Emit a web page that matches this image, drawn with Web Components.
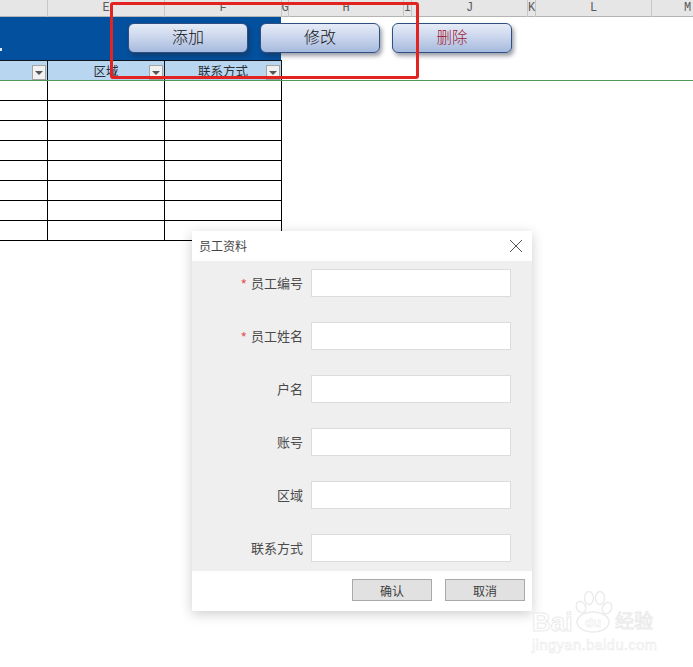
<!DOCTYPE html>
<html lang="zh">
<head>
<meta charset="utf-8">
<title>员工资料</title>
<style>
  html, body { margin: 0; height: 100%; overflow: hidden; background: #fff; }
  body { position: relative; width: 693px; height: 667px; font-family: "Noto Sans CJK SC", sans-serif; }
</style>
</head>
<body>
<excel-sheet></excel-sheet>
<macro-button style="left:128px">添加</macro-button>
<macro-button style="left:260px">修改</macro-button>
<macro-button style="left:392px" danger>删除</macro-button>
<red-mark></red-mark>
<staff-dialog></staff-dialog>
<baidu-mark></baidu-mark>

<script>
const COLS = '48px 117px 117px 7px 115px 8px 116px 8px 116px 72px'

class ExcelSheet extends HTMLElement {
  constructor() {
    super()
    this.shadow = this.attachShadow({ mode: 'open' })
  }

  connectedCallback() {
    const letters = ['', 'E', 'F', 'G', 'H', 'I', 'J', 'K', 'L', 'M']
    const heads = letters.map(l => `<span class="letter">${l}</span>`).join('')
    let rows = ''
    for (let i = 0; i < 8; i++) {
      rows += '<div class="row"><i></i><i></i><i></i></div>'
    }

    this.shadow.innerHTML = `
      <style>
        :host { display: block; width: 693px; overflow: hidden; }
        .letters {
          display: grid;
          grid-template-columns: ${COLS};
          height: 16px;
          background: #e6e6e6;
          border-bottom: 1px solid #b4b4b4;
        }
        .letter {
          display: flex;
          justify-content: center;
          border-right: 1px solid #c6c6c6;
          font: 12px/17px "Liberation Mono", monospace;
          color: #5a5a5a;
        }
        .banner {
          width: 281px;
          height: 43px;
          background: #03509e;
          position: relative;
        }
        .banner::before {
          content: "";
          position: absolute;
          left: 0;
          top: 31px;
          width: 2px;
          height: 3px;
          background: #dfe9f4;
        }
        .heads {
          display: flex;
          height: 21px;
          box-sizing: border-box;
          border-bottom: 1px solid #4f9a56;
        }
        .rows { width: 282px; }
        .row {
          display: grid;
          grid-template-columns: 48px 117px 117px;
          height: 20px;
          box-sizing: border-box;
          border-bottom: 1px solid #000;
        }
        .row i { border-right: 1px solid #000; }
      </style>
      <div class="letters">${heads}</div>
      <div class="banner"></div>
      <div class="heads">
        <filter-cell style="width:48px"></filter-cell>
        <filter-cell style="width:117px">区域</filter-cell>
        <filter-cell style="width:117px">联系方式</filter-cell>
      </div>
      <div class="rows">${rows}</div>
    `
  }
}

class FilterCell extends HTMLElement {
  constructor() {
    super()
    this.shadow = this.attachShadow({ mode: 'open' })
    this.shadow.innerHTML = `
      <style>
        :host {
          display: flex;
          justify-content: center;
          position: relative;
          box-sizing: border-box;
          height: 20px;
          background: #b8d6f0;
          border-top: 1px solid #10151c;
          border-right: 1px solid #10151c;
          font: 12.5px/20px "Noto Sans CJK SC", sans-serif;
          color: #2a2f35;
        }
        .arrow {
          position: absolute;
          right: 1px;
          top: 4px;
          width: 14px;
          height: 15px;
          box-sizing: border-box;
          background: #f1f1f1;
          border: 1px solid #a4a4a4;
          display: flex;
          align-items: center;
          justify-content: center;
        }
        .arrow::after {
          content: "";
          border: 4px solid transparent;
          border-top: 4px solid #555;
          border-bottom: 0;
        }
      </style>
      <slot></slot>
      <span class="arrow"></span>
    `
  }
}

class MacroButton extends HTMLElement {
  constructor() {
    super()
    this.shadow = this.attachShadow({ mode: 'open' })
    this.shadow.innerHTML = `
      <style>
        :host {
          position: absolute;
          top: 23px;
          width: 120px;
          height: 30px;
          box-sizing: border-box;
          padding-bottom: 4px;
          display: flex;
          align-items: center;
          justify-content: center;
          border: 1px solid #2f4f82;
          border-radius: 6px;
          background: linear-gradient(#e6ecf7, #d2dcef 35%, #a6bade);
          box-shadow: 2px 3px 4px rgba(30, 40, 60, .45);
          font: 300 16px "Noto Sans CJK SC", sans-serif;
          color: #111;
        }
        :host([danger]) { color: #a01530; font-size: 15.5px; }
      </style>
      <slot></slot>
    `
  }
}

class RedMark extends HTMLElement {
  constructor() {
    super()
    this.shadow = this.attachShadow({ mode: 'open' })
    this.shadow.innerHTML = `
      <style>
        :host {
          position: absolute;
          left: 110px;
          top: 2px;
          width: 309px;
          height: 77px;
          box-sizing: border-box;
          border: 3px solid #e3231f;
          border-radius: 3px;
        }
      </style>
    `
  }
}

class StaffField extends HTMLElement {
  constructor() {
    super()
    this.shadow = this.attachShadow({ mode: 'open' })
    this.shadow.innerHTML = `
      <style>
        :host {
          display: flex;
          align-items: center;
          justify-content: flex-end;
          gap: 8px;
          height: 28px;
          font-size: 13px;
          color: #4a4a4a;
        }
        label { position: relative; top: -1px; }
        .star { display: none; position: relative; top: 2px; color: #e2585c; margin-right: 4px; font-size: 14px; }
        :host([required]) .star { display: inline; }
        .box {
          width: 200px;
          height: 28px;
          box-sizing: border-box;
          background: #fff;
          border: 1px solid #dcdcdc;
        }
      </style>
      <label><span class="star">*</span><slot></slot></label>
      <div class="box"></div>
    `
  }
}

class DialogButton extends HTMLElement {
  constructor() {
    super()
    this.shadow = this.attachShadow({ mode: 'open' })
    this.shadow.innerHTML = `
      <style>
        :host {
          display: flex;
          align-items: center;
          justify-content: center;
          width: 80px;
          height: 22px;
          box-sizing: border-box;
          background: #e1e1e1;
          border: 1px solid #a9a9a9;
          font-size: 12px;
          color: #3c3c3c;
        }
      </style>
      <slot></slot>
    `
  }
}

class StaffDialog extends HTMLElement {
  constructor() {
    super()
    this.shadow = this.attachShadow({ mode: 'open' })
    this.shadow.innerHTML = `
      <style>
        :host {
          position: absolute;
          left: 192px;
          top: 231px;
          width: 340px;
          height: 380px;
          display: flex;
          flex-direction: column;
          background: #fff;
          box-shadow: 0 3px 12px rgba(0, 0, 0, .2);
          font-family: "Noto Sans CJK SC", sans-serif;
        }
        .title {
          height: 30px;
          flex: none;
          box-sizing: border-box;
          padding: 0 9px 2px 7px;
          display: flex;
          align-items: center;
          justify-content: space-between;
          font-size: 12px;
          color: #444;
        }
        .title svg { display: block; position: relative; top: 1px; }
        .body {
          height: 310px;
          flex: none;
          box-sizing: border-box;
          background: #efefef;
          padding: 8px 21px 0 0;
          display: flex;
          flex-direction: column;
          gap: 25px;
        }
        .foot {
          flex: 1;
          display: flex;
          justify-content: flex-end;
          gap: 13px;
          padding: 8px 7px 0 0;
        }
      </style>
      <div class="title">
        <span>员工资料</span>
        <svg width="14" height="14" viewBox="0 0 14 14" fill="none" stroke="#555" stroke-width="1">
          <path d="M1 1 13 13M13 1 1 13"/>
        </svg>
      </div>
      <div class="body">
        <staff-field required>员工编号</staff-field>
        <staff-field required>员工姓名</staff-field>
        <staff-field>户名</staff-field>
        <staff-field>账号</staff-field>
        <staff-field>区域</staff-field>
        <staff-field>联系方式</staff-field>
      </div>
      <div class="foot">
        <dialog-button>确认</dialog-button>
        <dialog-button>取消</dialog-button>
      </div>
    `
  }
}

class BaiduMark extends HTMLElement {
  constructor() {
    super()
    this.shadow = this.attachShadow({ mode: 'open' })
    this.shadow.innerHTML = `
      <style>
        :host {
          position: absolute;
          left: 532px;
          top: 591px;
          width: 130px;
          height: 60px;
          color: #fff;
          -webkit-text-stroke: 1px #ebebeb;
        }
        svg { position: absolute; left: 40px; top: 0; }
        svg text { font: bold 13px "Liberation Sans", sans-serif; stroke-width: .6; fill: #fff; }
        .bai { position: absolute; left: 0; top: 16px; font: bold 26px/30px "Liberation Sans", sans-serif; }
        .jy { position: absolute; left: 83px; top: 16px; font: 19px/26px "Noto Sans CJK SC", sans-serif; white-space: nowrap; }
        .url { position: absolute; left: 0; top: 45px; font: 14.5px/18px "Liberation Sans", sans-serif; letter-spacing: .5px; white-space: nowrap; -webkit-text-stroke-width: .6px; }
      </style>
      <span class="bai">Bai</span>
      <svg width="44" height="44" viewBox="0 0 44 44" fill="#fff" stroke="#ebebeb" stroke-width="1.4">
        <ellipse cx="9" cy="16" rx="4.5" ry="6" transform="rotate(-25 9 16)"/>
        <ellipse cx="17" cy="7" rx="4.5" ry="6.5"/>
        <ellipse cx="28" cy="7" rx="4.5" ry="6.5"/>
        <ellipse cx="35" cy="17" rx="4.5" ry="6" transform="rotate(25 35 17)"/>
        <ellipse cx="21" cy="31" rx="16" ry="10"/>
        <text x="21" y="36" text-anchor="middle">du</text>
      </svg>
      <span class="jy">经验</span>
      <span class="url">jingyan.baidu.com</span>
    `
  }
}

customElements.define('filter-cell', FilterCell)
customElements.define('excel-sheet', ExcelSheet)
customElements.define('macro-button', MacroButton)
customElements.define('red-mark', RedMark)
customElements.define('staff-field', StaffField)
customElements.define('dialog-button', DialogButton)
customElements.define('staff-dialog', StaffDialog)
customElements.define('baidu-mark', BaiduMark)
</script>
</body>
</html>
